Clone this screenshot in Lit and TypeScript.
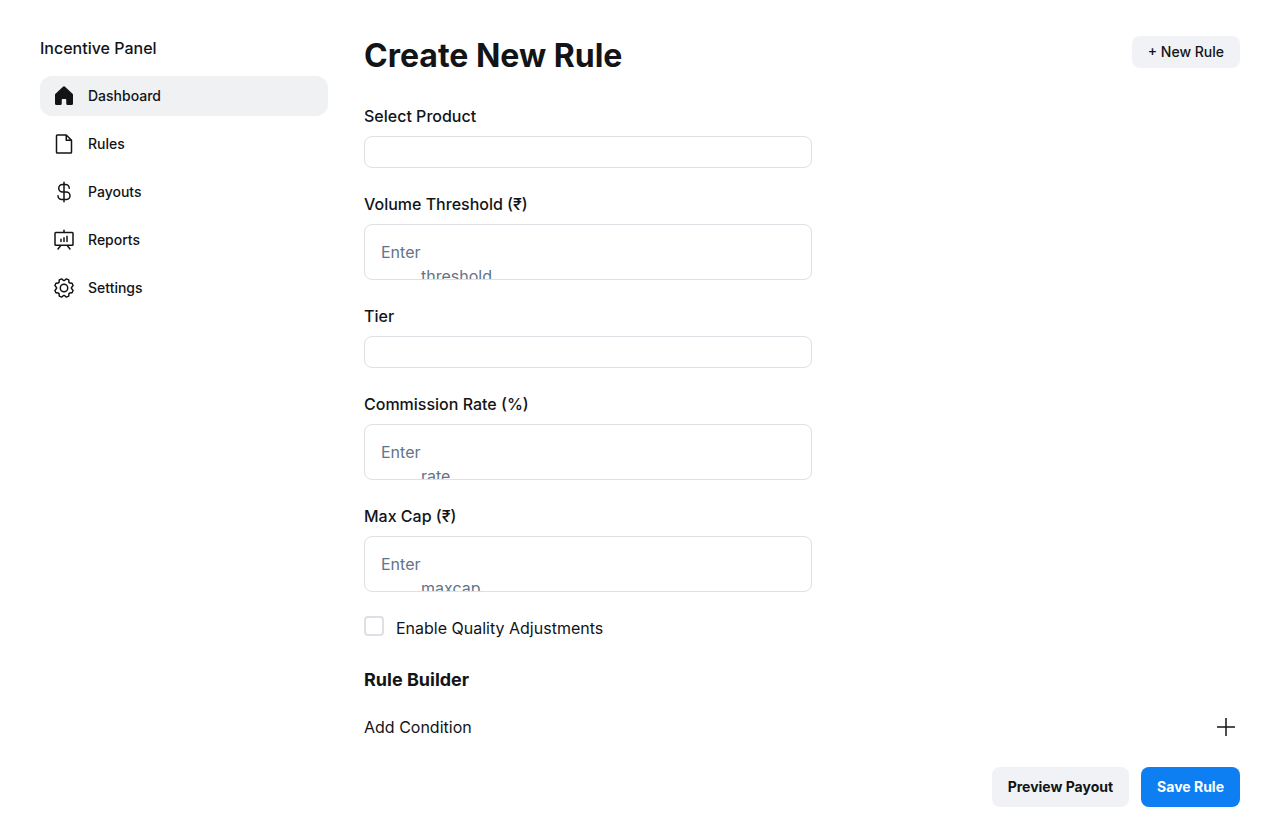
import { LitElement, html, css, svg, nothing } from "lit";
import { customElement, property, state } from "lit/decorators.js";

const icons = {
  home: svg`<path fill="currentColor" d="M224 115.55V208a16 16 0 0 1-16 16H168a16 16 0 0 1-16-16V168a8 8 0 0 0-8-8H112a8 8 0 0 0-8 8v40a16 16 0 0 1-16 16H48a16 16 0 0 1-16-16V115.55a16 16 0 0 1 5.17-11.78l80-75.48.11-.11a16 16 0 0 1 21.53 0 1.14 1.14 0 0 0 .11.11l80 75.48A16 16 0 0 1 224 115.55Z"/>`,
  file: svg`<path fill="currentColor" d="M213.66 82.34l-56-56A8 8 0 0 0 152 24H56A16 16 0 0 0 40 40V216a16 16 0 0 0 16 16H200a16 16 0 0 0 16-16V88A8 8 0 0 0 213.66 82.34ZM160 51.31 188.69 80H160ZM200 216H56V40h88V88a8 8 0 0 0 8 8h48V216Z"/>`,
  dollar: svg`<path fill="currentColor" d="M152 120H136V56h8a32 32 0 0 1 32 32 8 8 0 0 0 16 0 48.05 48.05 0 0 0-48-48h-8V24a8 8 0 0 0-16 0V40h-8a48 48 0 0 0 0 96h8v64H104a32 32 0 0 1-32-32 8 8 0 0 0-16 0 48.05 48.05 0 0 0 48 48h16v16a8 8 0 0 0 16 0V216h16a48 48 0 0 0 0-96Zm-40 0a32 32 0 0 1 0-64h8v64Zm40 80H136V136h16a32 32 0 0 1 0 64Z"/>`,
  chart: svg`<path fill="currentColor" d="M216 40H136V24a8 8 0 0 0-16 0V40H40A16 16 0 0 0 24 56V176a16 16 0 0 0 16 16H79.36L57.75 219a8 8 0 0 0 12.5 10l29.59-37h56.32l29.59 37a8 8 0 1 0 12.5-10l-21.61-27H216a16 16 0 0 0 16-16V56A16 16 0 0 0 216 40Zm0 136H40V56H216V176ZM104 120v24a8 8 0 0 1-16 0V120a8 8 0 0 1 16 0Zm32-16v40a8 8 0 0 1-16 0V104a8 8 0 0 1 16 0Zm32-16v56a8 8 0 0 1-16 0V88a8 8 0 0 1 16 0Z"/>`,
  gear: svg`<path fill="currentColor" d="M128 80a48 48 0 1 0 48 48A48.05 48.05 0 0 0 128 80Zm0 80a32 32 0 1 1 32-32A32 32 0 0 1 128 160Zm88-29.84q.06-2.16 0-4.32l14.92-18.64a8 8 0 0 0 1.48-7.06 107.6 107.6 0 0 0-10.88-26.25 8 8 0 0 0-6-3.93l-23.72-2.64q-1.48-1.56-3-3L186 40.54a8 8 0 0 0-3.94-6 107.29 107.29 0 0 0-26.25-10.86 8 8 0 0 0-7.06 1.48L130.16 40Q128 40 125.84 40L107.2 25.11a8 8 0 0 0-7.06-1.48A107.6 107.6 0 0 0 73.89 34.51a8 8 0 0 0-3.93 6L67.32 64.27q-1.56 1.49-3 3L40.54 70a8 8 0 0 0-6 3.94 107.71 107.71 0 0 0-10.87 26.25 8 8 0 0 0 1.49 7.06L40 125.84Q40 128 40 130.16L25.11 148.8a8 8 0 0 0-1.48 7.06 107.6 107.6 0 0 0 10.88 26.25 8 8 0 0 0 6 3.93l23.72 2.64q1.49 1.56 3 3L70 215.46a8 8 0 0 0 3.94 6 107.71 107.71 0 0 0 26.25 10.87 8 8 0 0 0 7.06-1.49L125.84 216q2.16.06 4.32 0l18.64 14.92a8 8 0 0 0 7.06 1.48 107.21 107.21 0 0 0 26.25-10.88 8 8 0 0 0 3.93-6l2.64-23.72q1.56-1.48 3-3L215.46 186a8 8 0 0 0 6-3.94 107.71 107.71 0 0 0 10.87-26.25 8 8 0 0 0-1.49-7.06Zm-16.1-6.5a73.93 73.93 0 0 1 0 8.68 8 8 0 0 0 1.74 5.48l14.19 17.73a91.57 91.57 0 0 1-6.23 15L187 173.11a8 8 0 0 0-5.1 2.64 74.11 74.11 0 0 1-6.14 6.14 8 8 0 0 0-2.64 5.1l-2.51 22.58a91.32 91.32 0 0 1-15 6.23l-17.74-14.19a8 8 0 0 0-5-1.75h-.48a73.93 73.93 0 0 1-8.68 0 8 8 0 0 0-5.48 1.74L100.45 215.8a91.57 91.57 0 0 1-15-6.23L82.89 187a8 8 0 0 0-2.64-5.1 74.11 74.11 0 0 1-6.14-6.14 8 8 0 0 0-5.1-2.64L46.43 170.6a91.32 91.32 0 0 1-6.23-15l14.19-17.74a8 8 0 0 0 1.74-5.48 73.93 73.93 0 0 1 0-8.68 8 8 0 0 0-1.74-5.48L40.2 100.45a91.57 91.57 0 0 1 6.23-15L69 82.89a8 8 0 0 0 5.1-2.64 74.11 74.11 0 0 1 6.14-6.14A8 8 0 0 0 82.89 69L85.4 46.43a91.32 91.32 0 0 1 15-6.23l17.74 14.19a8 8 0 0 0 5.48 1.74 73.93 73.93 0 0 1 8.68 0 8 8 0 0 0 5.48-1.74L155.55 40.2a91.57 91.57 0 0 1 15 6.23L173.11 69a8 8 0 0 0 2.64 5.1 74.11 74.11 0 0 1 6.14 6.14 8 8 0 0 0 5.1 2.64l22.58 2.51a91.32 91.32 0 0 1 6.23 15l-14.19 17.74A8 8 0 0 0 199.87 123.66Z"/>`,
};

const navItems: { label: string; icon: keyof typeof icons }[] = [
  { label: "Dashboard", icon: "home" },
  { label: "Rules", icon: "file" },
  { label: "Payouts", icon: "dollar" },
  { label: "Reports", icon: "chart" },
  { label: "Settings", icon: "gear" },
];

@customElement("side-nav")
export class SideNav extends LitElement {
  @property() current = "Dashboard";

  static styles = css`
    :host { display: block; }
    .title { margin: 0 0 16px; font-size: 16px; line-height: 24px; font-weight: 500; }
    .list { display: flex; flex-direction: column; gap: 8px; margin: 0; padding: 0; list-style: none; }
    .link {
      display: flex; align-items: center; gap: 12px; padding: 8px 12px;
      border-radius: 12px; color: inherit; text-decoration: none;
      font-size: 14px; line-height: 24px; font-weight: 500;
    }
    .link[aria-current] { background: #f0f1f3; }
    .icon { width: 24px; height: 24px; flex: none; }
  `;

  render() {
    return html`
      <p class="title">Incentive Panel</p>
      <nav>
        <ul class="list">
          ${navItems.map(
            (item) => html`<li>
              <a class="link" href="#" aria-current=${item.label === this.current ? "page" : nothing}>
                <svg class="icon" viewBox="0 0 256 256" aria-hidden="true">${icons[item.icon]}</svg>
                ${item.label}
              </a>
            </li>`
          )}
        </ul>
      </nav>
    `;
  }
}

interface Field {
  id: string;
  label: string;
  hint?: string;
}

const fields: Field[] = [
  { id: "product", label: "Select Product" },
  { id: "threshold", label: "Volume Threshold (₹)", hint: "Enter\n\tthreshold" },
  { id: "tier", label: "Tier" },
  { id: "rate", label: "Commission Rate (%)", hint: "Enter\n\trate" },
  { id: "maxcap", label: "Max Cap (₹)", hint: "Enter\n\tmaxcap" },
];

@customElement("app-root")
export class AppRoot extends LitElement {
  @state() private quality = false;

  static styles = css`
    :host {
      display: block; min-height: 100vh; box-sizing: border-box;
      background: #fff; color: #121417; font-family: Inter, "Noto Sans", sans-serif;
    }
    *, *::before, *::after { box-sizing: border-box; }
    .page { display: grid; grid-template-columns: 288px minmax(0, 1fr); gap: 36px; padding: 36px 40px 32px; }
    .head { display: flex; justify-content: space-between; align-items: flex-start; margin-bottom: 28px; }
    .heading { margin: 0; font-size: 32px; line-height: 40px; font-weight: 700; }
    .fields { display: flex; flex-direction: column; gap: 24px; max-width: 448px; }
    .field { display: flex; flex-direction: column; gap: 8px; font-size: 16px; line-height: 24px; }
    .label { font-weight: 500; }
    .control {
      appearance: none; display: block; width: 100%; margin: 0;
      border: 1px solid #dde0e4; border-radius: 8px; background: #fff;
      color: inherit; font: inherit;
    }
    .select { height: 32px; padding: 0 16px; }
    .area { height: 56px; padding: 15px 16px 0; resize: none; overflow: hidden; tab-size: 40px; }
    .area::placeholder { color: #637488; opacity: 1; }
    .check { display: flex; align-items: flex-start; gap: 12px; font-size: 16px; line-height: 24px; }
    .box {
      appearance: none; width: 20px; height: 20px; margin: 0; flex: none;
      border: 2px solid #dde0e4; border-radius: 4px; background: #fff;
    }
    .box:checked { background: #0d7ff2; border-color: #0d7ff2; }
    .subheading { margin: 28px 0 24px; font-size: 18px; line-height: 23px; font-weight: 700; }
    .condition { display: flex; justify-content: space-between; align-items: center; font-size: 16px; line-height: 24px; }
    .add { display: flex; width: 28px; height: 24px; padding: 0; border: 0; background: none; color: inherit; align-items: center; justify-content: center; }
    .plus { width: 24px; height: 24px; }
    .actions { display: flex; justify-content: flex-end; gap: 12px; margin-top: 28px; }
    .button {
      height: 40px; padding: 0 16px; border: 0; border-radius: 8px;
      background: #f0f2f5; color: inherit; font: 700 14px/24px Inter, "Noto Sans", sans-serif;
    }
    .small { height: 32px; font-weight: 500; }
    .primary { background: #0d7ff2; color: #fff; }
  `;

  private renderField(f: Field) {
    return html`<div class="field">
      <label class="label" for=${f.id}>${f.label}</label>
      ${f.hint
        ? html`<textarea class="control area" id=${f.id} placeholder=${f.hint}></textarea>`
        : html`<select class="control select" id=${f.id}></select>`}
    </div>`;
  }

  render() {
    return html`
      <div class="page">
        <side-nav></side-nav>
        <main>
          <header class="head">
            <h1 class="heading">Create New Rule</h1>
            <button class="button small" type="button">+ New Rule</button>
          </header>
          <div class="fields">
            ${fields.map((f) => this.renderField(f))}
            <label class="check">
              <input
                class="box"
                type="checkbox"
                .checked=${this.quality}
                @change=${(e: Event) => (this.quality = (e.target as HTMLInputElement).checked)}
              />
              Enable Quality Adjustments
            </label>
          </div>
          <h2 class="subheading">Rule Builder</h2>
          <div class="condition">
            <span>Add Condition</span>
            <button class="add" type="button" aria-label="Add condition">
              <svg class="plus" viewBox="0 0 24 24" fill="none" stroke="currentColor" stroke-width="1.5" aria-hidden="true">
                <path d="M12 3v18M3 12h18" />
              </svg>
            </button>
          </div>
          <div class="actions">
            <button class="button" type="button">Preview Payout</button>
            <button class="button primary" type="button">Save Rule</button>
          </div>
        </main>
      </div>
    `;
  }
}
